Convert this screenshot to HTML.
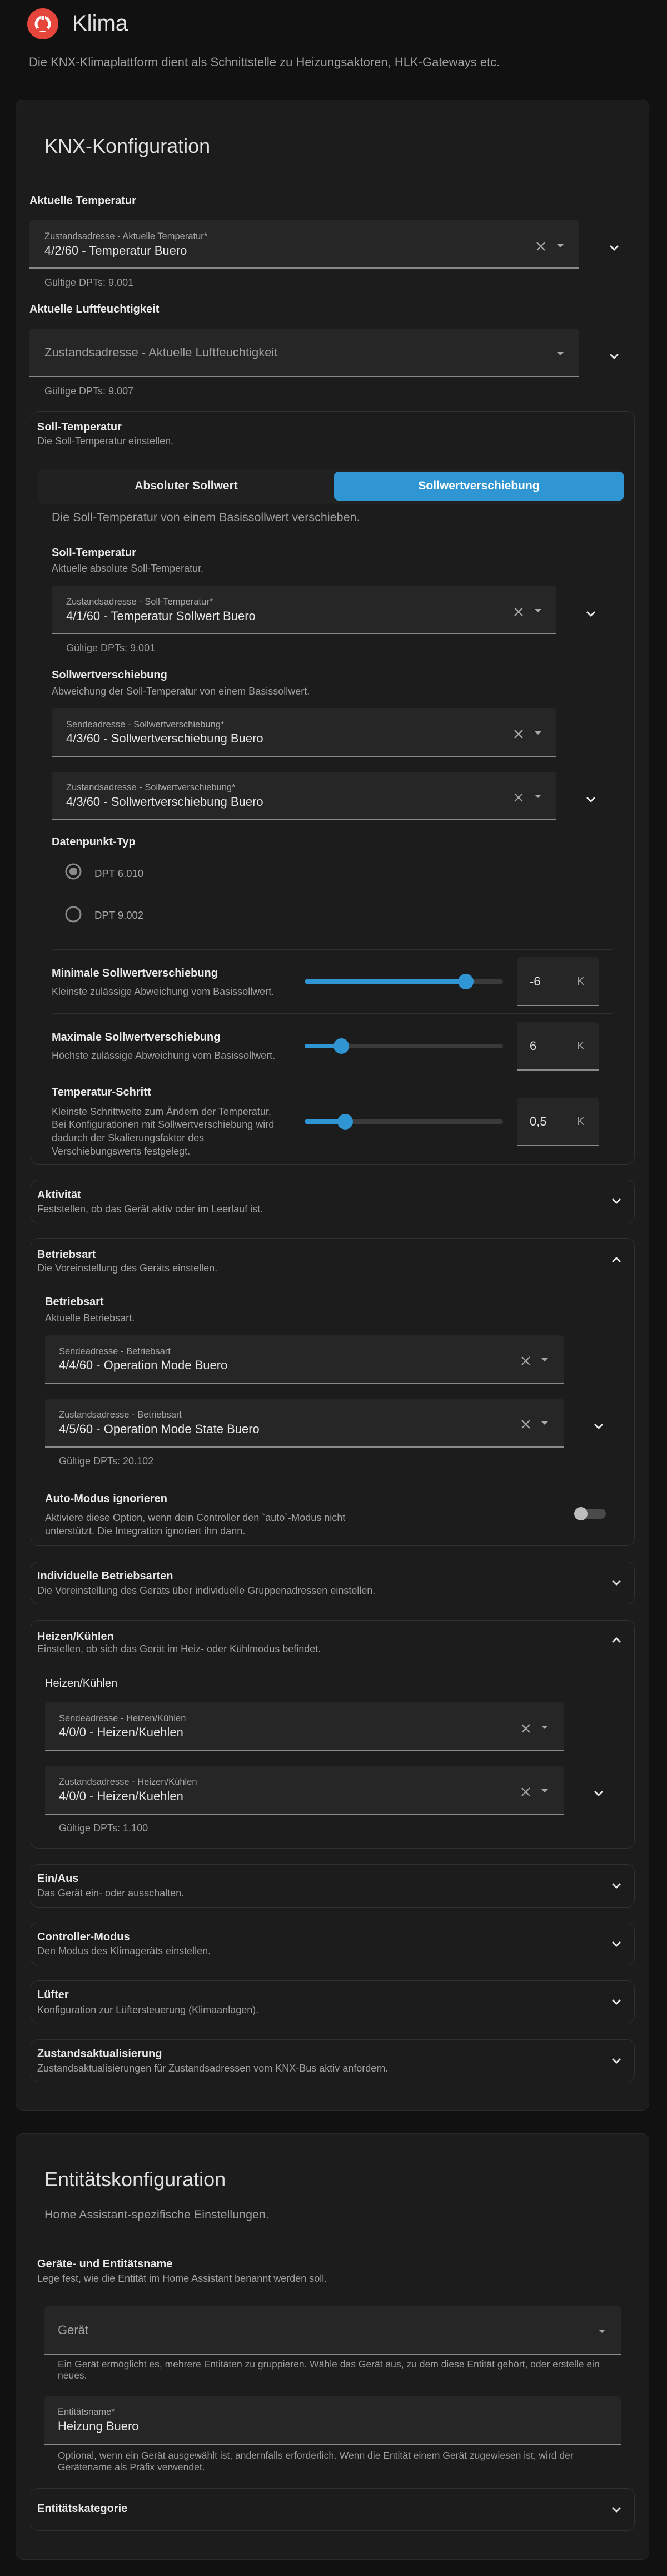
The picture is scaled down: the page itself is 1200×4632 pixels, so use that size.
<!DOCTYPE html>
<html><head><meta charset="utf-8">
<style>
html,body{margin:0;padding:0;background:#111111;}
body{width:1200px;height:4632px;position:relative;overflow:hidden;font-family:"Liberation Sans",sans-serif;color:#e1e1e1;}
.t{position:absolute;line-height:1;white-space:nowrap;}
.card{position:absolute;background:#1c1c1c;border:1px solid #2a2a2a;border-radius:14px;box-sizing:border-box;}
.sub{position:absolute;border:1px solid #303030;border-radius:14px;box-sizing:border-box;left:55px;width:1087px;}
.f{position:absolute;background:#262626;border-radius:6px 6px 0 0;border-bottom:2px solid #8a8a8a;box-sizing:border-box;}
.h{font-weight:bold;font-size:20px;color:#e8e8e8;margin-top:-1px;}
.d{font-size:18px;color:#a0a0a0;margin-top:-1px;}
.lab{font-size:16.5px;color:#a8a8a8;margin-top:-1px;}
.val{font-size:22px;color:#e6e6e6;margin-top:-1px;}
.g{font-size:18px;color:#9e9e9e;}
.hp{font-size:17.5px;color:#9e9e9e;}
.sep{position:absolute;height:1px;background:#2e2e2e;}
svg{position:absolute;}
.track{position:absolute;height:8px;border-radius:4px;background:#3a3a3a;}
.act{position:absolute;height:8px;border-radius:4px;background:#2f96d3;}
.thumb{position:absolute;width:28px;height:28px;border-radius:50%;background:#2f96d3;}
</style></head><body>

<svg style="left:49px;top:15px" width="56" height="56" viewBox="0 0 56 56">
<circle cx="28" cy="28" r="28" fill="#e5453a"/>
<circle cx="28" cy="28" r="12" fill="none" stroke="#fff" stroke-width="5"/>
<rect x="24" y="10" width="8" height="10" fill="#e5453a"/>
<rect x="25.5" y="13" width="5" height="8" fill="#fff"/>
<rect x="18" y="35" width="20" height="6" fill="#e5453a"/>
</svg>
<div class="t" style="left:130px;top:22px;font-size:40px;color:#e4e4e4">Klima</div>
<div class="t" style="left:52px;top:101px;font-size:22px;color:#a0a0a0">Die KNX-Klimaplattform dient als Schnittstelle zu Heizungsaktoren, HLK-Gateways etc.</div>

<div class="card" style="left:28px;top:179px;width:1140px;height:3616px"></div>
<div class="t" style="left:80px;top:245px;font-size:36px">KNX-Konfiguration</div>

<div class="t h" style="left:53px;top:352px">Aktuelle Temperatur</div>
<div class="f" style="left:53px;top:396px;width:989px;height:87px"></div>
<div class="t lab" style="left:80px;top:418px">Zustandsadresse - Aktuelle Temperatur*</div>
<div class="t val" style="left:80px;top:441px">4/2/60 - Temperatur Buero</div>
<div class="t g" style="left:80px;top:499px">Gültige DPTs: 9.001</div>

<div class="t h" style="left:53px;top:547px">Aktuelle Luftfeuchtigkeit</div>
<div class="f" style="left:53px;top:591px;width:989px;height:87px"></div>
<div class="t" style="left:80px;top:623px;font-size:22px;color:#a0a0a0">Zustandsadresse - Aktuelle Luftfeuchtigkeit</div>
<div class="t g" style="left:80px;top:694px">Gültige DPTs: 9.007</div>

<div class="sub" style="top:739px;height:1355px"></div>
<div class="t h" style="left:67px;top:759px">Soll-Temperatur</div>
<div class="t d" style="left:67px;top:785px">Die Soll-Temperatur einstellen.</div>
<div style="position:absolute;left:69px;top:844px;width:1053px;height:62px;background:#212121;border-radius:10px"></div>
<div style="position:absolute;left:601px;top:848px;width:521px;height:52px;background:#2f96d3;border-radius:8px"></div>
<div class="t" style="left:69px;width:532px;text-align:center;top:863px;font-size:21px;font-weight:bold;color:#e8e8e8">Absoluter Sollwert</div>
<div class="t" style="left:601px;width:521px;text-align:center;top:863px;font-size:21px;font-weight:bold;color:#fff">Sollwertverschiebung</div>
<div class="t" style="left:93px;top:920px;font-size:21.5px;color:#a0a0a0">Die Soll-Temperatur von einem Basissollwert verschieben.</div>

<div class="t h" style="left:93px;top:985px">Soll-Temperatur</div>
<div class="t d" style="left:93px;top:1014px">Aktuelle absolute Soll-Temperatur.</div>
<div class="f" style="left:93px;top:1053px;width:908px;height:87px"></div>
<div class="t lab" style="left:119px;top:1075px">Zustandsadresse - Soll-Temperatur*</div>
<div class="t val" style="left:119px;top:1098px">4/1/60 - Temperatur Sollwert Buero</div>
<div class="t g" style="left:119px;top:1156px">Gültige DPTs: 9.001</div>

<div class="t h" style="left:93px;top:1205px">Sollwertverschiebung</div>
<div class="t d" style="left:93px;top:1235px">Abweichung der Soll-Temperatur von einem Basissollwert.</div>
<div class="f" style="left:93px;top:1273px;width:908px;height:88px"></div>
<div class="t lab" style="left:119px;top:1296px">Sendeadresse - Sollwertverschiebung*</div>
<div class="t val" style="left:119px;top:1318px">4/3/60 - Sollwertverschiebung Buero</div>
<div class="f" style="left:93px;top:1388px;width:908px;height:86px"></div>
<div class="t lab" style="left:119px;top:1409px">Zustandsadresse - Sollwertverschiebung*</div>
<div class="t val" style="left:119px;top:1432px">4/3/60 - Sollwertverschiebung Buero</div>

<div class="t h" style="left:93px;top:1505px">Datenpunkt-Typ</div>
<svg style="left:117px;top:1552px" width="30" height="30"><circle cx="15" cy="15" r="13" fill="none" stroke="#8a8a8a" stroke-width="3"/><circle cx="15" cy="15" r="7" fill="#8a8a8a"/></svg>
<div class="t" style="left:170px;top:1562px;font-size:18.5px;color:#aaa">DPT 6.010</div>
<svg style="left:117px;top:1629px" width="30" height="30"><circle cx="15" cy="15" r="13" fill="none" stroke="#8a8a8a" stroke-width="3"/></svg>
<div class="t" style="left:170px;top:1637px;font-size:18.5px;color:#aaa">DPT 9.002</div>

<div class="sep" style="left:93px;width:1010px;top:1707px"></div>
<div class="t h" style="left:93px;top:1741px">Minimale Sollwertverschiebung</div>
<div class="t d" style="left:93px;top:1775px">Kleinste zulässige Abweichung vom Basissollwert.</div>
<div class="track" style="left:548px;width:357px;top:1761px"></div>
<div class="act" style="left:548px;width:290px;top:1761px"></div>
<div class="thumb" style="left:824px;top:1751px"></div>
<div class="f" style="left:930px;top:1721px;width:147px;height:88px"></div>
<div class="t val" style="left:953px;top:1755px">-6</div>
<div class="t" style="left:1038px;top:1755px;font-size:20px;color:#9e9e9e">K</div>

<div class="sep" style="left:93px;width:1010px;top:1822px"></div>
<div class="t h" style="left:93px;top:1856px">Maximale Sollwertverschiebung</div>
<div class="t d" style="left:93px;top:1890px">Höchste zulässige Abweichung vom Basissollwert.</div>
<div class="track" style="left:548px;width:357px;top:1877px"></div>
<div class="act" style="left:548px;width:66px;top:1877px"></div>
<div class="thumb" style="left:600px;top:1867px"></div>
<div class="f" style="left:930px;top:1838px;width:147px;height:87px"></div>
<div class="t val" style="left:953px;top:1871px">6</div>
<div class="t" style="left:1038px;top:1871px;font-size:20px;color:#9e9e9e">K</div>

<div class="sep" style="left:93px;width:1010px;top:1938px"></div>
<div class="t h" style="left:93px;top:1955px">Temperatur-Schritt</div>
<div class="t d" style="left:93px;top:1991px">Kleinste Schrittweite zum Ändern der Temperatur.</div>
<div class="t d" style="left:93px;top:2014px">Bei Konfigurationen mit Sollwertverschiebung wird</div>
<div class="t d" style="left:93px;top:2038px">dadurch der Skalierungsfaktor des</div>
<div class="t d" style="left:93px;top:2062px">Verschiebungswerts festgelegt.</div>
<div class="track" style="left:548px;width:357px;top:2013px"></div>
<div class="act" style="left:548px;width:73px;top:2013px"></div>
<div class="thumb" style="left:607px;top:2003px"></div>
<div class="f" style="left:930px;top:1974px;width:147px;height:87px"></div>
<div class="t val" style="left:953px;top:2007px">0,5</div>
<div class="t" style="left:1038px;top:2007px;font-size:20px;color:#9e9e9e">K</div>

<div class="sub" style="top:2121px;height:79px"></div>
<div class="t h" style="left:67px;top:2140px">Aktivität</div>
<div class="t d" style="left:67px;top:2166px">Feststellen, ob das Gerät aktiv oder im Leerlauf ist.</div>

<div class="sub" style="top:2226px;height:554px"></div>
<div class="t h" style="left:67px;top:2247px">Betriebsart</div>
<div class="t d" style="left:67px;top:2272px">Die Voreinstellung des Geräts einstellen.</div>
<div class="t h" style="left:81px;top:2332px">Betriebsart</div>
<div class="t d" style="left:81px;top:2362px">Aktuelle Betriebsart.</div>
<div class="f" style="left:81px;top:2401px;width:933px;height:88px"></div>
<div class="t lab" style="left:106px;top:2423px">Sendeadresse - Betriebsart</div>
<div class="t val" style="left:106px;top:2445px">4/4/60 - Operation Mode Buero</div>
<div class="f" style="left:81px;top:2515px;width:933px;height:88px"></div>
<div class="t lab" style="left:106px;top:2537px">Zustandsadresse - Betriebsart</div>
<div class="t val" style="left:106px;top:2560px">4/5/60 - Operation Mode State Buero</div>
<div class="t g" style="left:106px;top:2618px">Gültige DPTs: 20.102</div>
<div class="sep" style="left:81px;width:1034px;top:2664px"></div>
<div class="t h" style="left:81px;top:2686px">Auto-Modus ignorieren</div>
<div class="t d" style="left:81px;top:2721px">Aktiviere diese Option, wenn dein Controller den `auto`-Modus nicht</div>
<div class="t d" style="left:81px;top:2745px">unterstützt. Die Integration ignoriert ihn dann.</div>
<div style="position:absolute;left:1040px;top:2713px;width:50px;height:18px;border-radius:9px;background:#4a4a4a"></div>
<div style="position:absolute;left:1033px;top:2710px;width:24px;height:24px;border-radius:50%;background:#bdbdbd"></div>

<div class="sub" style="top:2808px;height:77px"></div>
<div class="t h" style="left:67px;top:2825px">Individuelle Betriebsarten</div>
<div class="t d" style="left:67px;top:2852px">Die Voreinstellung des Geräts über individuelle Gruppenadressen einstellen.</div>

<div class="sub" style="top:2913px;height:411px"></div>
<div class="t h" style="left:67px;top:2934px">Heizen/Kühlen</div>
<div class="t d" style="left:67px;top:2957px">Einstellen, ob sich das Gerät im Heiz- oder Kühlmodus befindet.</div>
<div class="t h" style="left:81px;top:3018px;font-weight:normal">Heizen/Kühlen</div>
<div class="f" style="left:81px;top:3061px;width:933px;height:88px"></div>
<div class="t lab" style="left:106px;top:3083px">Sendeadresse - Heizen/Kühlen</div>
<div class="t val" style="left:106px;top:3105px">4/0/0 - Heizen/Kuehlen</div>
<div class="f" style="left:81px;top:3175px;width:933px;height:88px"></div>
<div class="t lab" style="left:106px;top:3197px">Zustandsadresse - Heizen/Kühlen</div>
<div class="t val" style="left:106px;top:3220px">4/0/0 - Heizen/Kuehlen</div>
<div class="t g" style="left:106px;top:3278px">Gültige DPTs: 1.100</div>

<div class="sub" style="top:3352px;height:78px"></div>
<div class="t h" style="left:67px;top:3369px">Ein/Aus</div>
<div class="t d" style="left:67px;top:3396px">Das Gerät ein- oder ausschalten.</div>
<div class="sub" style="top:3457px;height:77px"></div>
<div class="t h" style="left:67px;top:3474px">Controller-Modus</div>
<div class="t d" style="left:67px;top:3500px">Den Modus des Klimageräts einstellen.</div>
<div class="sub" style="top:3561px;height:77px"></div>
<div class="t h" style="left:67px;top:3578px">Lüfter</div>
<div class="t d" style="left:67px;top:3606px">Konfiguration zur Lüftersteuerung (Klimaanlagen).</div>
<div class="sub" style="top:3667px;height:77px"></div>
<div class="t h" style="left:67px;top:3684px">Zustandsaktualisierung</div>
<div class="t d" style="left:67px;top:3711px">Zustandsaktualisierungen für Zustandsadressen vom KNX-Bus aktiv anfordern.</div>

<div class="card" style="left:28px;top:3836px;width:1140px;height:767px"></div>
<div class="t" style="left:80px;top:3901px;font-size:36px">Entitätskonfiguration</div>
<div class="t" style="left:80px;top:3972px;font-size:21.5px;color:#a0a0a0">Home Assistant-spezifische Einstellungen.</div>
<div class="t h" style="left:67px;top:4062px">Geräte- und Entitätsname</div>
<div class="t d" style="left:67px;top:4089px">Lege fest, wie die Entität im Home Assistant benannt werden soll.</div>
<div class="f" style="left:80px;top:4147px;width:1037px;height:87px"></div>
<div class="t" style="left:104px;top:4179px;font-size:22px;color:#a0a0a0">Gerät</div>
<div class="t hp" style="left:104px;top:4243px">Ein Gerät ermöglicht es, mehrere Entitäten zu gruppieren. Wähle das Gerät aus, zu dem diese Entität gehört, oder erstelle ein</div>
<div class="t hp" style="left:104px;top:4263px">neues.</div>
<div class="f" style="left:80px;top:4309px;width:1037px;height:87px"></div>
<div class="t lab" style="left:104px;top:4330px">Entitätsname*</div>
<div class="t val" style="left:104px;top:4353px">Heizung Buero</div>
<div class="t hp" style="left:104px;top:4407px">Optional, wenn ein Gerät ausgewählt ist, andernfalls erforderlich. Wenn die Entität einem Gerät zugewiesen ist, wird der</div>
<div class="t hp" style="left:104px;top:4428px">Gerätename als Präfix verwendet.</div>
<div class="sub" style="top:4474px;height:77px"></div>
<div class="t h" style="left:67px;top:4502px">Entitätskategorie</div>

<svg width="0" height="0"><defs>
<g id="x"><path d="M-7 -7L7 7M7 -7L-7 7" stroke="#a8a8a8" stroke-width="2.2" fill="none"/></g>
<g id="tri"><path d="M-6 -3L6 -3L0 3Z" fill="#a8a8a8"/></g>
<g id="chev"><path d="M-7 -4L0 3L7 -4" stroke="#e8e8e8" stroke-width="2.8" fill="none"/></g>
<g id="chup"><path d="M-7 3L0 -4L7 3" stroke="#e8e8e8" stroke-width="2.8" fill="none"/></g>
</defs></svg>
<svg style="left:0;top:0" width="1200" height="4632">
<use href="#x" x="973" y="443"/><use href="#tri" x="1008" y="442"/><use href="#chev" x="1105" y="446"/>
<use href="#tri" x="1008" y="636"/><use href="#chev" x="1105" y="641"/>
<use href="#x" x="933" y="1100"/><use href="#tri" x="968" y="1098"/><use href="#chev" x="1063" y="1104"/>
<use href="#x" x="933" y="1320"/><use href="#tri" x="968" y="1318"/>
<use href="#x" x="933" y="1434"/><use href="#tri" x="968" y="1432"/><use href="#chev" x="1063" y="1438"/>
<use href="#chev" x="1109" y="2160"/>
<use href="#chup" x="1109" y="2266"/>
<use href="#x" x="946" y="2447"/><use href="#tri" x="980" y="2445"/>
<use href="#x" x="946" y="2561"/><use href="#tri" x="980" y="2559"/><use href="#chev" x="1077" y="2565"/>
<use href="#chev" x="1109" y="2846"/>
<use href="#chup" x="1109" y="2950"/>
<use href="#x" x="946" y="3108"/><use href="#tri" x="980" y="3106"/>
<use href="#x" x="946" y="3222"/><use href="#tri" x="980" y="3220"/><use href="#chev" x="1077" y="3225"/>
<use href="#chev" x="1109" y="3391"/>
<use href="#chev" x="1109" y="3496"/>
<use href="#chev" x="1109" y="3600"/>
<use href="#chev" x="1109" y="3706"/>
<use href="#tri" x="1083" y="4192"/>
<use href="#chev" x="1109" y="4513"/>
</svg>
</body></html>
